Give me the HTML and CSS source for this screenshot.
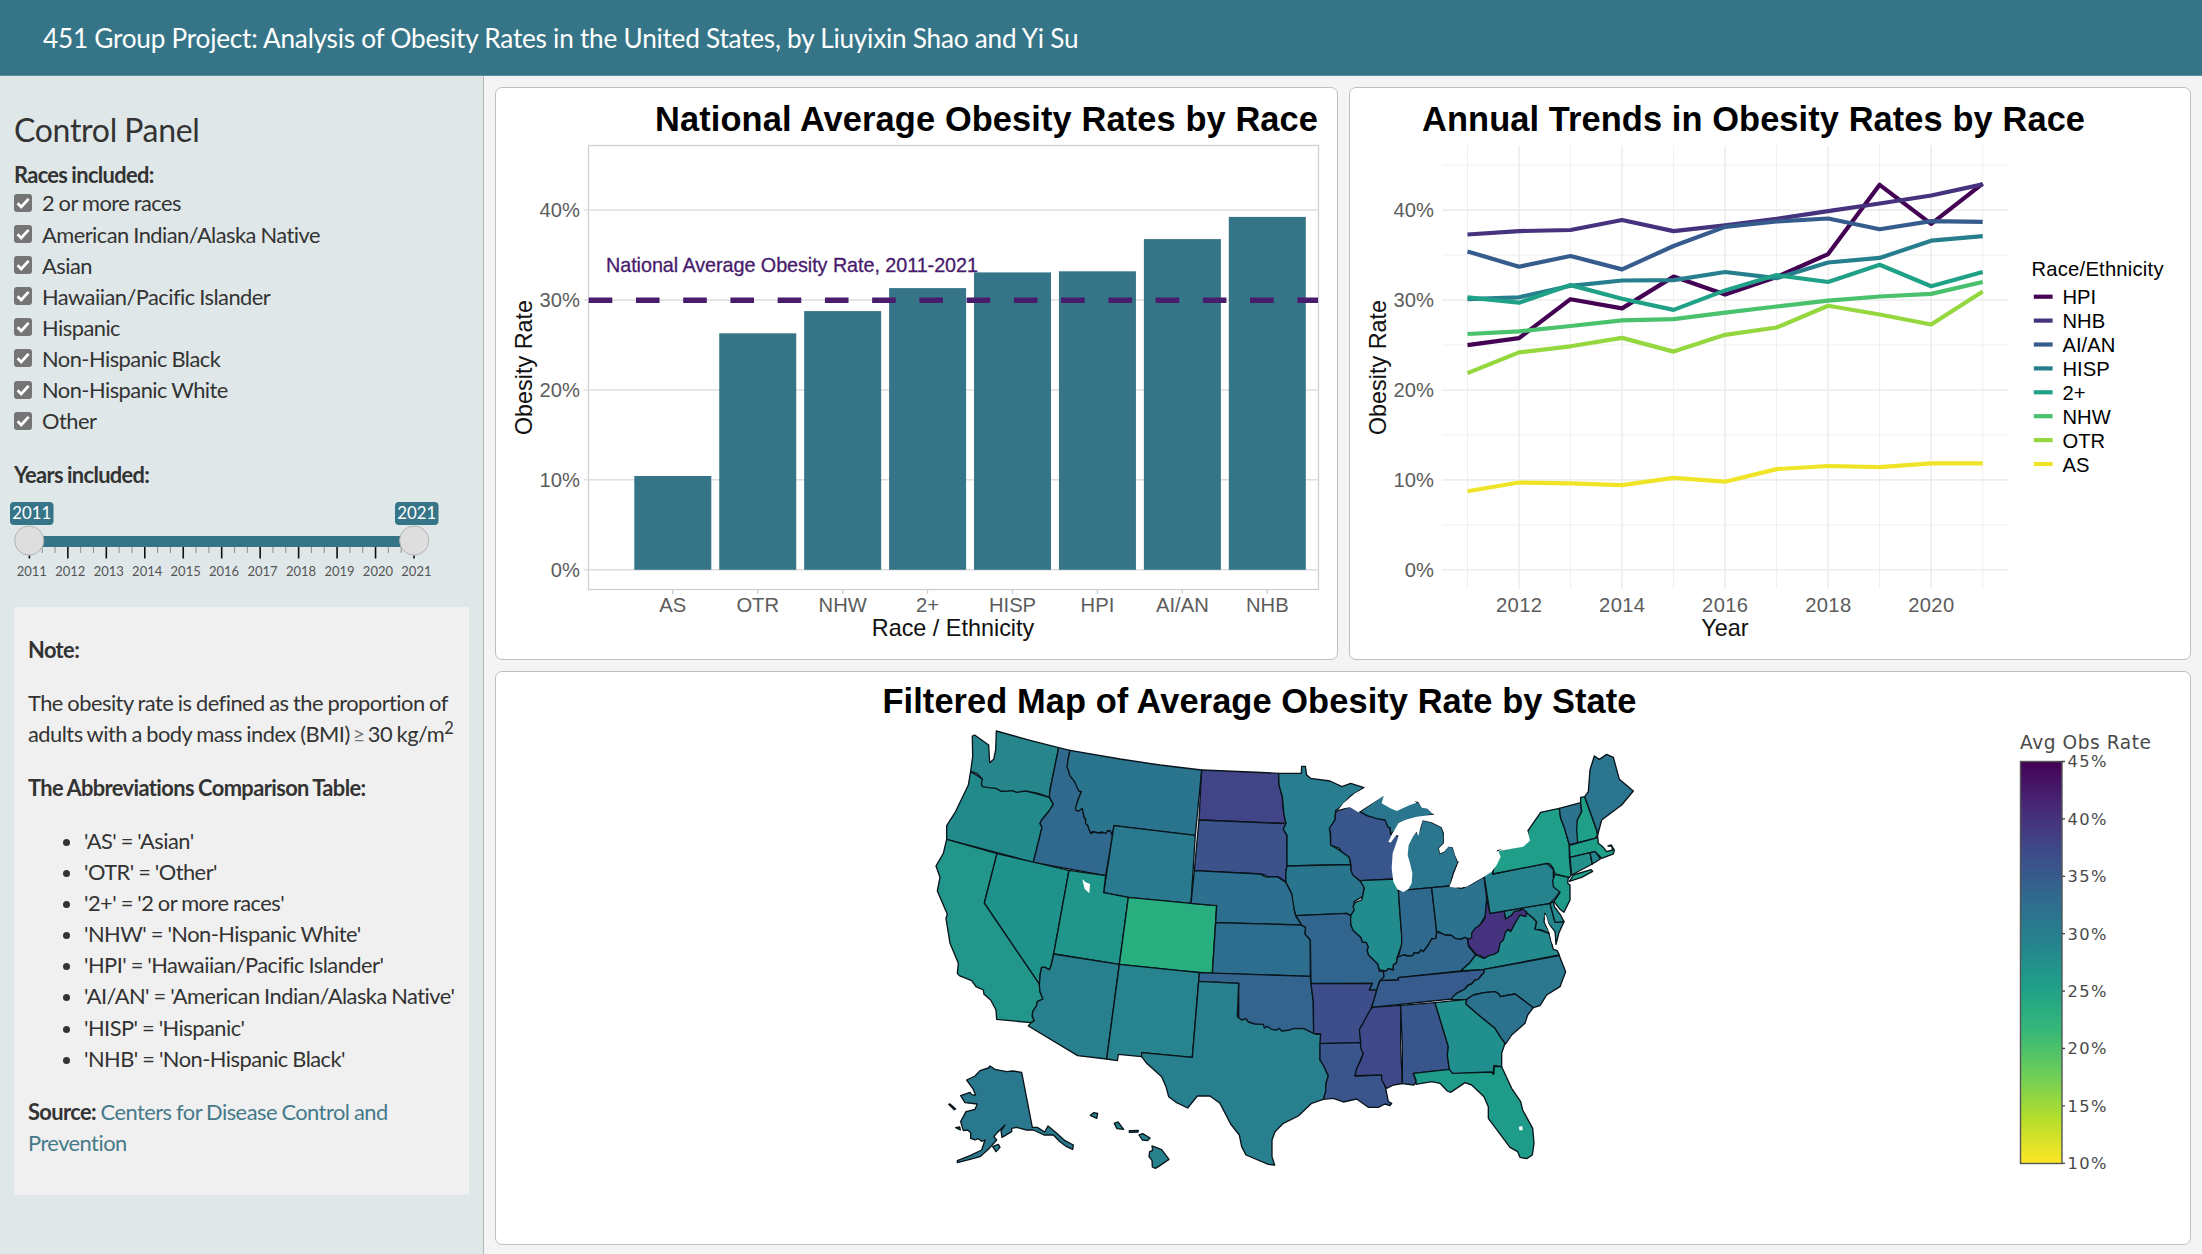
FILE: index.html
```html
<!DOCTYPE html>
<html lang="en">
<head>
<meta charset="utf-8">
<title>451 Group Project</title>
<link rel="stylesheet" href="styles.css">
</head>
<body>
<header class="navbar"><h1 class="brand">451 Group Project: Analysis of Obesity Rates in the United States, by Liuyixin Shao and Yi Su</h1></header>
<div class="layout">
<aside class="sidebar">
  <h2 class="panel-title">Control Panel</h2>
  <p class="group-label">Races included:</p>
  <ul class="checks" id="checks"></ul>
  <p class="group-label years">Years included:</p>
  <svg class="slider" viewBox="0 496 484 90" id="slider"></svg>
  <section class="note">
    <p><b>Note:</b></p>
    <p class="definition">The obesity rate is defined as the proportion of<br>adults with a body mass index (BMI) <span class="geq">≥</span> 30 kg/m<sup>2</sup></p>
    <p><b>The Abbreviations Comparison Table:</b></p>
    <ul class="abbr">
      <li>'AS' = 'Asian'</li>
      <li>'OTR' = 'Other'</li>
      <li>'2+' = '2 or more races'</li>
      <li>'NHW' = 'Non-Hispanic White'</li>
      <li>'HPI' = 'Hawaiian/Pacific Islander'</li>
      <li>'AI/AN' = 'American Indian/Alaska Native'</li>
      <li>'HISP' = 'Hispanic'</li>
      <li>'NHB' = 'Non-Hispanic Black'</li>
    </ul>
    <p><b>Source:</b> <a>Centers for Disease Control and<br>Prevention</a></p>
  </section>
</aside>
<main class="charts">
  <section class="card"><svg viewBox="496 88 841 571" id="bars"></svg></section>
  <section class="card"><svg viewBox="1350 88 840 571" id="lines"></svg></section>
  <section class="card wide"><svg viewBox="496 672 1694 572" id="map">
    <defs><linearGradient id="viridis" x1="0" y1="0" x2="0" y2="1">
      <stop offset="0" stop-color="#440154"/><stop offset=".111" stop-color="#482878"/><stop offset=".222" stop-color="#3e4a89"/><stop offset=".333" stop-color="#31688e"/><stop offset=".444" stop-color="#26828e"/><stop offset=".556" stop-color="#1f9e89"/><stop offset=".667" stop-color="#35b779"/><stop offset=".778" stop-color="#6dcd59"/><stop offset=".889" stop-color="#b4de2c"/><stop offset="1" stop-color="#fde725"/>
    </linearGradient></defs>
    <text class="title" x="882.5" y="712.5" textLength="754">Filtered Map of Average Obesity Rate by State</text>
    <g transform="translate(920 710) scale(.33333)">
      <g class="states">
        <path id="OR" fill="#238a8c" d="M152 184L145 225 105 308 80 347V388L340 457 366 352 360 340 365 330 385 306 400 283 388 262 316 242 187 207Z"/>
        <path id="WA" fill="#26868c" d="M157 78L164 75 206 105 209 158 221 148 227 120 229 63 330 91 416 113 390 240V262L355 250 316 243 290 247 276 242 263 243 244 244 228 235 205 233 187 230 184 222 187 207 170 190 152 184 158 140Z"/>
        <path id="ID" fill="#31688d" d="M416 113L450 121 444 150 445 180 464 215 484 245 474 270 468 300 487 295 492 320 503 345 512 370 525 366 545 369 570 362 578 376 557 497 340 457 366 352 360 340 365 330 385 306 400 283 388 260 390 240Z"/>
        <path id="MT" fill="#2b748e" d="M450 121L600 147 720 165 845 180 826 376 780 371 582 347 577 376 570 362 563 362 558 370 545 366 535 369 525 366 517 364 512 370 507 358 503 345 497 342V328L492 320 487 295 475 304 467 300 467 292 474 270 484 245 476 243 464 215 450 198 445 180 441 172 444 150Z"/>
        <path id="WY" fill="#297a8e" d="M582 347L826 376 813 580 780 577 625 562 551 548Z"/>
        <path id="CA" fill="#22968a" d="M80 388L231 431 193 579 358 822 360 845 369 867 352 875 349 888 338 905 337 920 343 932 333 938 230 928 228 900 212 870 192 853 190 840 168 830 155 812 118 797 112 790 115 760 90 700 78 625 82 613 52 543 60 502 48 468 70 430Z"/>
        <path id="NV" fill="#20928c" d="M231 431L447 481 401 732 393 768 388 779 375 772 365 772 361 790 358 822 193 579Z"/>
        <path id="UT" fill="#209589" d="M447 481L557 497 551 548 625 562 598 763 401 732Z"/>
        <path id="CO" fill="#29af7f" d="M625 562L813 580 890 587 877 790 780 782 598 763Z"/>
        <path id="AZ" fill="#287f8e" d="M401 732L598 763 560 1047 473 1037 325 948 333 938 343 932 337 918 338 905 349 888 352 875 369 867 360 845 358 822 361 790 365 772 375 772 388 779 393 768Z"/>
        <path id="NM" fill="#27838d" d="M598 763L838 788 817 1042 665 1028V1040L595 1033 592 1052 560 1047Z"/>
        <path id="ND" fill="#414487" d="M845 180L990 186 1076 190 1077 225 1087 260 1088 285 1092 315 1098 340 837 330Z"/>
        <path id="SD" fill="#3b528b" d="M837 330L1098 341 1090 358 1100 375 1101 465 1097 490 1098 517 1084 506 1072 500 1045 501 1034 495 1022 492 823 482Z"/>
        <path id="NE" fill="#2c6f8e" d="M823 482L1022 492 1034 500 1045 501 1072 500 1098 517 1105 530 1115 550 1123 580V600L1128 620 1145 645 887 638 890 587 813 580Z"/>
        <path id="KS" fill="#2d6e8e" d="M887 638L1145 645 1157 653 1155 672 1171 690V799L877 790Z"/>
        <path id="OK" fill="#32648e" d="M838 788L1171 799 1173 820 1180 875 1181 970 956 970 956 820 836 814Z"/>
        <path id="TX" fill="#287f8e" d="M836 814L956 820 952 920 965 930 978 926 985 936 1005 942 1030 943 1033 954 1042 949 1054 958 1070 960 1077 955 1085 963 1110 960 1118 956 1150 955 1181 970 1190 973 1202 972 1200 1050 1210 1065 1225 1098 1218 1120 1217 1145 1210 1168 1175 1180 1135 1218 1090 1240 1065 1265 1056 1290V1340L1064 1365 1045 1363 978 1335 965 1310 958 1275 932 1242 900 1180 870 1158H832L803 1194 770 1178 746 1160 738 1130 725 1100 680 1060 665 1040V1028L817 1042Z"/>
        <path id="MN" fill="#287e8e" d="M1076 190H1144L1145 169H1156L1160 195 1172 205 1230 213 1266 230 1292 220 1332 233 1290 260 1257 295 1247 302 1245 330 1230 355 1232 405 1265 425 1288 442 1292 463 1101 468V375L1090 358 1098 340 1092 315 1087 260 1077 225Z"/>
        <path id="IA" fill="#2a758e" d="M1101 468L1292 464 1293 480 1305 500 1320 512 1333 530 1328 560 1302 575 1303 600 1292 617 1280 610 1128 617 1123 600 1115 550 1098 517 1097 490Z"/>
        <path id="WI" fill="#39568c" d="M1247 305L1290 290 1320 305 1342 317 1395 330 1410 352 1412 372 1440 380 1430 507 1320 512 1305 500 1298 495 1293 480V464L1288 442 1265 425 1258 415 1232 405V370L1228 355 1245 330Z"/>
        <path id="MI_UP" fill="#2a768e" d="M1320 305L1390 256 1400 270 1430 290 1470 275 1497 278 1505 291 1522 294 1540 312 1490 330 1440 350 1412 372 1410 352 1404 352 1395 330 1385 328 1370 326 1342 317Z"/>
        <path id="MI" fill="#2a768e" d="M1507 330L1535 337 1565 352 1572 375V400L1557 415 1560 430 1572 425 1582 408 1598 412 1614 458 1600 490 1590 528 1535 533 1440 542 1455 420 1470 380 1500 360Z"/>
        <path id="IL" fill="#228b8d" d="M1320 512L1425 507 1435 540 1440 610 1445 675V705L1432 740 1430 758 1420 765V780L1405 776 1398 783 1378 780 1373 762 1345 735 1341 720 1345 712 1338 697H1327L1323 683 1300 662 1292 645 1290 620 1303 600 1299 590 1305 578 1325 570 1333 535 1329 527Z"/>
        <path id="IN" fill="#30698e" d="M1435 542L1535 533 1550 665 1548 685 1535 687 1525 705 1510 725 1503 720 1495 730 1483 728 1478 737 1465 738 1450 735 1435 742 1445 702V675L1440 610Z"/>
        <path id="OH" fill="#2b738e" d="M1535 533L1588 528 1625 535 1650 525 1692 500 1700 565V610L1680 645 1665 660 1660 680 1650 688 1635 682 1622 688 1605 685 1594 676 1575 675 1555 665H1550Z"/>
        <path id="MO" fill="#32658e" d="M1128 617L1280 610 1292 617V645L1300 662 1323 683 1327 697H1338L1345 712 1341 720 1345 735 1373 762 1378 783 1390 783 1392 805 1378 815 1370 841H1348L1357 820H1173L1171 690 1155 672 1157 653 1145 645Z"/>
        <path id="KY" fill="#31668d" d="M1390 783L1398 783 1405 776 1420 780V765L1430 758 1432 742 1450 735 1465 738 1478 737 1483 728 1495 730 1503 720 1510 725 1525 705 1535 687 1548 685 1550 665 1575 675 1594 676 1605 685 1622 688 1635 682 1643 688 1645 708 1667 735 1648 760 1622 783 1435 803V810L1380 812 1392 800Z"/>
        <path id="TN" fill="#375b8d" d="M1380 812L1435 810V803L1620 785 1692 778V788L1685 795 1675 808 1665 810 1655 822 1645 825 1635 837 1610 850 1595 867 1355 892 1363 865 1370 840Z"/>
        <path id="VA" fill="#238a8d" d="M1622 783L1648 760 1667 735 1692 745 1757 662 1800 610 1820 608 1840 625 1850 635 1845 655 1887 670 1900 718 1912 722 1918 735 1692 778Z"/>
        <path id="MD" fill="#25858d" d="M1752 603L1890 580 1905 637 1932 635 1917 668 1908 703 1905 665 1885 640 1875 610 1872 635 1890 671 1865 660 1845 658 1850 635 1840 625 1820 608 1805 597 1775 615 1757 628Z"/>
        <path id="WV" fill="#46337f" d="M1700 565L1710 610 1752 603 1757 627 1775 615 1783 604 1800 602 1807 597 1820 606 1817 620 1800 615 1785 640 1772 665 1765 658 1757 665 1750 690 1740 700 1735 725 1722 733 1708 736 1692 745 1680 736 1670 734 1647 708 1643 690 1655 683V670L1665 655 1680 645 1695 625Z"/>
        <path id="PA" fill="#26838e" d="M1692 495L1720 475 1718 492 1880 460 1900 478V500L1908 520 1920 545 1905 565 1890 580 1710 610Z"/>
        <path id="NY" fill="#1f9e89" d="M1718 492L1733 422 1810 407 1824 388V362L1862 307 1918 295 1922 325 1932 350 1948 405V440L1953 495 1948 503 1905 492 1900 475 1890 462 1880 460Z"/>
        <path id="NJ" fill="#1f9a8a" d="M1905 493L1945 502 1943 520 1950 525V570L1932 607 1920 598 1902 575 1920 547 1900 530 1898 512Z"/>
        <path id="DE" fill="#238a8d" d="M1890 580L1900 575 1903 590 1920 612 1932 635 1905 637Z"/>
        <path fill="#1f9e89" d="M1948 514L1960 495 2013 479 2018 484 1985 502Z"/>
        <path id="VT" fill="#2c738e" d="M1918 295L1982 278 1985 305 1972 330 1975 360 1973 398 1948 404 1932 350 1922 325Z"/>
        <path id="NH" fill="#1f9f88" d="M1982 278V262L1994 260 2030 360 2033 375 2025 385 1973 398 1970 360 1972 330 1985 305Z"/>
        <path id="ME" fill="#2b758e" d="M1994 260L2005 245 2010 180 2023 138 2038 148 2060 133 2080 142 2098 208 2140 243 2105 285 2045 330 2033 375 2030 360Z"/>
        <path id="MA" fill="#1f9f88" d="M1948 406L2025 385 2033 380 2035 400 2048 410 2060 425 2078 420 2075 408 2064 408 2074 405 2083 420 2080 432 2045 445 2025 425 1950 442Z"/>
        <path id="CT" fill="#23908b" d="M1950 442L2010 428 2017 462 1955 495Z"/>
        <path id="RI" fill="#25858d" d="M2010 428L2026 425 2041 447 2017 462Z"/>
        <path id="AR" fill="#3d4e8a" d="M1173 821L1357 820 1348 840H1370L1363 865 1355 890 1350 905 1320 955 1322 998 1200 1001 1202 972 1181 970 1180 875Z"/>
        <path id="LA" fill="#3a548c" d="M1200 1001L1322 998 1330 1030 1315 1065 1305 1098 1385 1095 1393 1120 1398 1140 1405 1175 1415 1180 1410 1187 1395 1182 1375 1192H1345L1310 1167 1270 1176 1240 1165 1210 1168 1217 1145 1218 1120 1225 1098 1210 1065 1200 1050Z"/>
        <path id="MS" fill="#3f4989" d="M1357 892L1442 886V1010L1447 1121 1420 1125 1400 1135 1385 1110V1095L1305 1097 1310 1075 1324 1048 1330 1030 1322 1015V995L1318 960 1345 910 1350 902Z"/>
        <path id="AL" fill="#39568c" d="M1442 886L1545 878 1585 1010 1582 1035 1588 1078 1480 1090 1488 1115 1482 1125 1447 1121V1010Z"/>
        <path id="FL" fill="#1f9c89" d="M1480 1090L1588 1078 1598 1088 1715 1085 1722 1092 1722 1070 1745 1070 1775 1135 1802 1175 1808 1200 1838 1255 1842 1300 1837 1335 1820 1346 1800 1342 1793 1325 1770 1312 1705 1225V1190L1692 1160 1655 1125 1635 1118 1592 1147 1582 1143 1560 1120 1535 1115 1488 1123V1110Z"/>
        <path id="GA" fill="#218f8d" d="M1545 878L1640 868 1638 882 1670 910 1725 955 1755 1000 1745 1030V1070L1722 1066 1719 1092 1714 1086 1598 1090 1588 1078 1582 1035 1585 1010Z"/>
        <path id="NC" fill="#2a778e" d="M1692 778L1918 737 1937 785 1920 830 1880 855 1860 887 1840 893 1785 852 1740 860 1737 852 1725 845 1692 848 1660 855 1640 868 1595 869 1597 862 1610 850 1635 837 1645 825 1655 822 1665 810 1675 808 1685 795 1692 788Z"/>
        <path id="SC" fill="#2c728e" d="M1640 868L1660 855 1692 848 1725 845 1737 852 1740 860 1785 852 1840 893 1823 915 1815 940 1775 975 1757 1002 1742 982 1725 955 1670 910 1638 882Z"/>
        <path id="AK" fill="#2a788e" d="M305 1087L337 1252 352 1252 374 1266 384 1248 405 1265 435 1292 460 1305 458 1318 440 1310 420 1295 400 1275 372 1275 340 1260H320L290 1252 275 1255 275 1265 246 1282 243 1263 255 1245 230 1270 222 1280 230 1290 205 1318 180 1340 150 1348 112 1358V1352L150 1337 185 1320 195 1290 185 1294 175 1286 165 1290 152 1285V1268L143 1260 130 1262 122 1235 138 1205 165 1198 172 1182 135 1178 122 1157 150 1147 155 1154 167 1155 158 1135 140 1110 165 1098 180 1082 205 1074 210 1068 225 1078 260 1085 278 1083Z"/>
        <g fill="#26838e">
          <path d="M86 1183L90 1182 107 1197 103 1199Z"/><path d="M107 1253L119 1251 121 1260Z"/><path d="M218 1310L235 1303 240 1312 228 1325Z"/>
          <path d="M511 1216L521 1208 533 1210 530 1225Z"/><path d="M583 1240L594 1236 611 1258 591 1256Z"/><path d="M628 1262L655 1261 654 1266 628 1267Z"/><path d="M657 1275L668 1271 690 1284 683 1292 667 1290Z"/><path d="M696 1308L725 1319 747 1348 715 1370 706 1375 697 1371 696 1351 687 1340 689 1325 698 1321Z"/>
        </g>
      </g>
      <g class="water">
        <path d="M1257 297L1270 280 1305 250 1335 233 1375 216 1425 240 1490 278 1470 285 1430 303 1411 295 1385 280 1391 258 1315 307 1290 292Z"/>
        <path d="M1405 395L1415 375 1435 340 1455 330 1490 320 1538 314 1560 330 1590 355 1617 430 1614 455 1605 435 1598 412 1585 410 1572 425 1560 430 1557 415 1572 400 1572 370 1565 352 1535 337 1508 331 1502 350 1495 378 1490 365 1480 378 1466 405 1463 435 1470 460 1477 490 1475 520 1465 538 1450 546 1432 538 1420 515 1415 475 1418 430 1432 390 1438 368 1425 380 1412 398Z"/>
        <path d="M1495 276L1505 293 1522 296 1538 312 1560 300 1530 270Z"/>
        <path d="M1614 460L1600 500 1588 530 1605 533 1640 530 1692 500 1715 485 1730 465 1742 440 1735 423 1660 440Z"/>
        <path d="M1733 424L1810 410 1830 392 1823 362 1815 390 1760 410Z"/>
        <path d="M1874 614L1878 616 1886 643 1902 667 1905 705 1896 700 1889 669 1876 640Z"/><path d="M1912 600L1932 612 1930 622 1920 608Z"/>
        <path d="M487 508L497 517 510 522 508 550 494 537Z"/><path d="M1797 1250L1807 1248 1808 1261 1798 1261Z"/>
      </g>
    </g>
    <g id="legend" class="bar-legend">
      <text class="bar-title" x="2020" y="749" textLength="131">Avg Obs Rate</text>
      <rect x="2020.5" y="761.5" width="41.5" height="402" fill="url(#viridis)" stroke="#555" stroke-width="1.4"/>
    </g>
  </svg></section>
</main>
</div>
<script src="app.js"></script>
</body>
</html>
```
FILE: styles.css
```css
* { box-sizing: border-box; }
html, body { height: 100%; }
body { margin: 0; display: flex; flex-direction: column; background: #f4f4f4; color: #333; font-family: Lato, "Open Sans", sans-serif; font-size: 21.85px; line-height: 31.1px; overflow: hidden; }
.navbar { flex: none; height: 76px; display: flex; align-items: center; padding: 2px 0 0 43px; background: #367587; border-bottom: 1px solid #5b8f9e; }
.brand { margin: 0; color: #fff; font-size: 26.2px; font-weight: 400; letter-spacing: -.245px; white-space: nowrap; }
.layout { flex: 1; min-height: 0; display: grid; grid-template-columns: 484px 1fr; }
.sidebar { background: #dfe7e9; border-right: 1px solid #b5b9ba; padding: 35px 14px 0; letter-spacing: -.52px; word-spacing: -.6px; font-variant-ligatures: common-ligatures; }
.panel-title { margin: 0; font-size: 32px; font-weight: 400; line-height: 38.4px; letter-spacing: -.3px; }
.group-label { margin: 13px 0 0; font-weight: 700; line-height: 25.7px; letter-spacing: -.65px; }
.note b { letter-spacing: -.6px; }
.checks { margin: -.7px 0 0; padding: 0; list-style: none; }
.checks li { display: flex; align-items: center; gap: 10px; height: 31.1px; }
.checks svg { width: 18px; height: 18px; flex: none; }
.years { margin-top: 26px; }
.slider { display: block; width: 484px; height: 90px; margin: 7.7px 0 0 -14px; letter-spacing: 0; }
.slider text { font: 13px Lato, sans-serif; fill: #555; text-anchor: middle; }
.slider .value { font-size: 16.8px; fill: #fff; }
.note { width: 455px; height: 588px; margin-top: 21px; padding: 27.5px 14px 0; background: #f0f0f0; white-space: nowrap; }
.note p { margin: 0 0 22.2px; }
.note sup { font-size: 75%; line-height: 0; }
.note a { color: #457a8a; }
.geq { color: #777; margin: 0 -1.5px; }
.abbr { margin: 0 0 22.2px; padding-left: 56px; }
.charts { display: grid; grid-template-columns: 843px 842px; grid-template-rows: 573px 574px; gap: 11px; padding: 11px 0 0 11px; }
.card { background: #fff; border: 1px solid #bfbfbf; border-radius: 7px; overflow: hidden; }
.card svg { display: block; width: 100%; height: 100%; }
.wide { grid-column: 1 / -1; }
.card text { font-family: "Liberation Sans", Arial, sans-serif; font-size: 20.2px; }
.card .title { font-size: 34.4px; font-weight: 700; fill: #000; }
.card .axis-title { font-size: 23.4px; fill: #111; text-anchor: middle; }
.tick { fill: #5c5c5c; }
.end { text-anchor: end; }
.mid { text-anchor: middle; }
.card .average { font-size: 19.8px; fill: #481b6d; stroke: #481b6d; stroke-width: .3; }
.series { fill: none; stroke-width: 4.2; stroke-linejoin: round; }
.states { stroke: #08131a; stroke-width: 4; stroke-linejoin: round; }
.water { fill: #fff; }
.card .bar-legend text { font-family: "DejaVu Sans", sans-serif; font-size: 16.3px; fill: #4a4a4a; }
.card .bar-legend .bar-title { font-size: 18.6px; }
```
FILE: app.js
```js
const byId = (id) => document.getElementById(id);
const add = (id, markup) => byId(id).insertAdjacentHTML('beforeend', markup);

// Race filter
add('checks', ['2 or more races', 'American Indian/Alaska Native', 'Asian', 'Hawaiian/Pacific Islander', 'Hispanic', 'Non-Hispanic Black', 'Non-Hispanic White', 'Other']
  .map(n => `<li><svg viewBox="0 0 18 18"><rect width="18" height="18" rx="3" fill="#757575"/><path d="M3.6 9.3l3.6 3.6 7.4-8" fill="none" stroke="#fff" stroke-width="2.8"/></svg>${n}</li>`).join(''));

// Year range
let s = '<rect x="28" y="536" width="386" height="11" fill="#367587"/>';
for (let i = 0; i <= 30; i++) {
  const x = 29.4 + i * 12.82, major = i % 3 === 0;
  s += `<path d="M${x} 547V${major ? 558.5 : 553}" stroke="${major ? '#111' : '#8a8f90'}" stroke-width="${major ? 1.6 : 1}"/>`;
  if (major) s += `<text x="${x + 2.4}" y="576">${2011 + i / 3}</text>`;
}
for (const [x, t] of [[10, 2011], [395, 2021]]) {
  s += `<rect x="${x}" y="502" width="43.5" height="23" rx="4" fill="#367587"/><text class="value" x="${x + 21.8}" y="518.6">${t}</text><circle cx="${x + 19.2}" cy="540.6" r="14.6" fill="#dedede" stroke="#b4b4b4"/>`;
}
add('slider', s);

// Average rate by race
const zero = 569.8, step = 89.93;
s = '<text class="title" x="655" y="131" textLength="663">National Average Obesity Rates by Race</text><rect x="588.5" y="145.5" width="730" height="444" fill="none" stroke="#cfcfcf" stroke-width="1.3"/>';
for (let i = 0; i < 5; i++) {
  const y = zero - i * step;
  s += `<path d="M584 ${y}H1318" stroke="#dedede" stroke-width="1.5"/><text class="tick end" x="580" y="${y + 7.4}">${i * 10}%</text>`;
}
[['AS', 476], ['OTR', 333.3], ['NHW', 311.1], ['2+', 288.1], ['HISP', 272.4], ['HPI', 271.3], ['AI/AN', 239.1], ['NHB', 216.9]].forEach(([n, y], i) => {
  const x = 634.3 + i * 84.93;
  s += `<rect x="${x}" y="${y}" width="77" height="${zero - y}" fill="#367587"/><path d="M${x + 38.5} 589V594" stroke="#cfcfcf" stroke-width="1.3"/><text class="tick mid" x="${x + 38.5}" y="612">${n}</text>`;
});
s += '<path d="M588.7 300.2H1318" stroke="#481b6d" stroke-width="5.6" stroke-dasharray="23.62 23.62"/><text class="average" x="606" y="272" textLength="372">National Average Obesity Rate, 2011-2021</text>';
s += '<text class="axis-title" x="953" y="636">Race / Ethnicity</text><text class="axis-title" transform="translate(531.5 367.5) rotate(-90)">Obesity Rate</text>';
add('bars', s);

// Yearly trends
const series = [
  ['HPI', '#440154', [345.1, 338.2, 299.2, 308.4, 276.6, 294.6, 277, 254.1, 184.8, 223.8, 183.6]],
  ['NHB', '#46337e', [234.5, 231.1, 230, 220, 231.1, 225.4, 218.9, 211.2, 203.5, 195.5, 184.4]],
  ['AI/AN', '#365c8d', [251.4, 266.7, 256, 269.4, 246, 226.9, 221.5, 218.5, 229.2, 221.1, 221.9]],
  ['HISP', '#277f8e', [299.2, 297.3, 285.8, 280.5, 280.1, 272, 278.2, 262.5, 257.9, 240.7, 236.1]],
  ['2+', '#1fa187', [297.3, 302.7, 285.1, 298.8, 309.9, 290.4, 275.1, 282, 264.8, 286.2, 272]],
  ['NHW', '#4ac16d', [334, 331.4, 326, 320.3, 319.1, 312.6, 306.5, 300.7, 296.5, 293.9, 282]],
  ['OTR', '#94d73e', [373.1, 352.4, 346.3, 337.9, 351.6, 334.8, 327.5, 305.7, 314.5, 324.5, 291.6]],
  ['AS', '#f0e428', [491.3, 482.5, 483.3, 485.2, 477.9, 481.7, 469.1, 466, 467.2, 463.4, 463.4]]
];
const year = (i) => 1467.5 + i * 51.52;
s = '<text class="title" x="1422" y="131" textLength="663">Annual Trends in Obesity Rates by Race</text>';
for (let i = 0; i < 10; i++) {
  const y = zero - i * step / 2;
  s += `<path d="M1442 ${y}H2008.5" stroke="#ededed" stroke-width="${i % 2 ? 0.9 : 1.6}"/>`;
  if (i % 2 === 0) s += `<text class="tick end" x="1434" y="${y + 7.4}">${i * 5}%</text>`;
}
for (let i = 0; i < 11; i++) {
  s += `<path d="M${year(i)} 145.5V589" stroke="#ededed" stroke-width="${i % 2 ? 1.6 : 0.9}"/>`;
  if (i % 2) s += `<text class="tick mid" x="${year(i)}" y="612" textLength="46">${2011 + i}</text>`;
}
s += '<text class="axis-title" x="1725" y="636">Year</text><text class="axis-title" transform="translate(1385.5 367.5) rotate(-90)">Obesity Rate</text><text x="2031.5" y="275.9" textLength="132">Race/Ethnicity</text>';
series.forEach(([n, c, v], i) => {
  const y = 296.7 + i * 23.9;
  s += `<polyline class="series" stroke="${c}" points="${v.map((p, k) => year(k) + ',' + p).join(' ')}"/><path d="M2033.8 ${y}H2052.6" stroke="${c}" stroke-width="4.2"/><text x="2062.5" y="${y + 7.5}">${n}</text>`;
});
add('lines', s);

// Color scale labels
s = '';
for (let i = 0; i < 8; i++) {
  const y = 761.5 + i * 57.4;
  s += `<path d="M2062 ${y}H2065" stroke="#444" stroke-width="1.3"/><text x="2067.5" y="${y + 5.8}" textLength="39">${45 - i * 5}%</text>`;
}
add('legend', s);
```
